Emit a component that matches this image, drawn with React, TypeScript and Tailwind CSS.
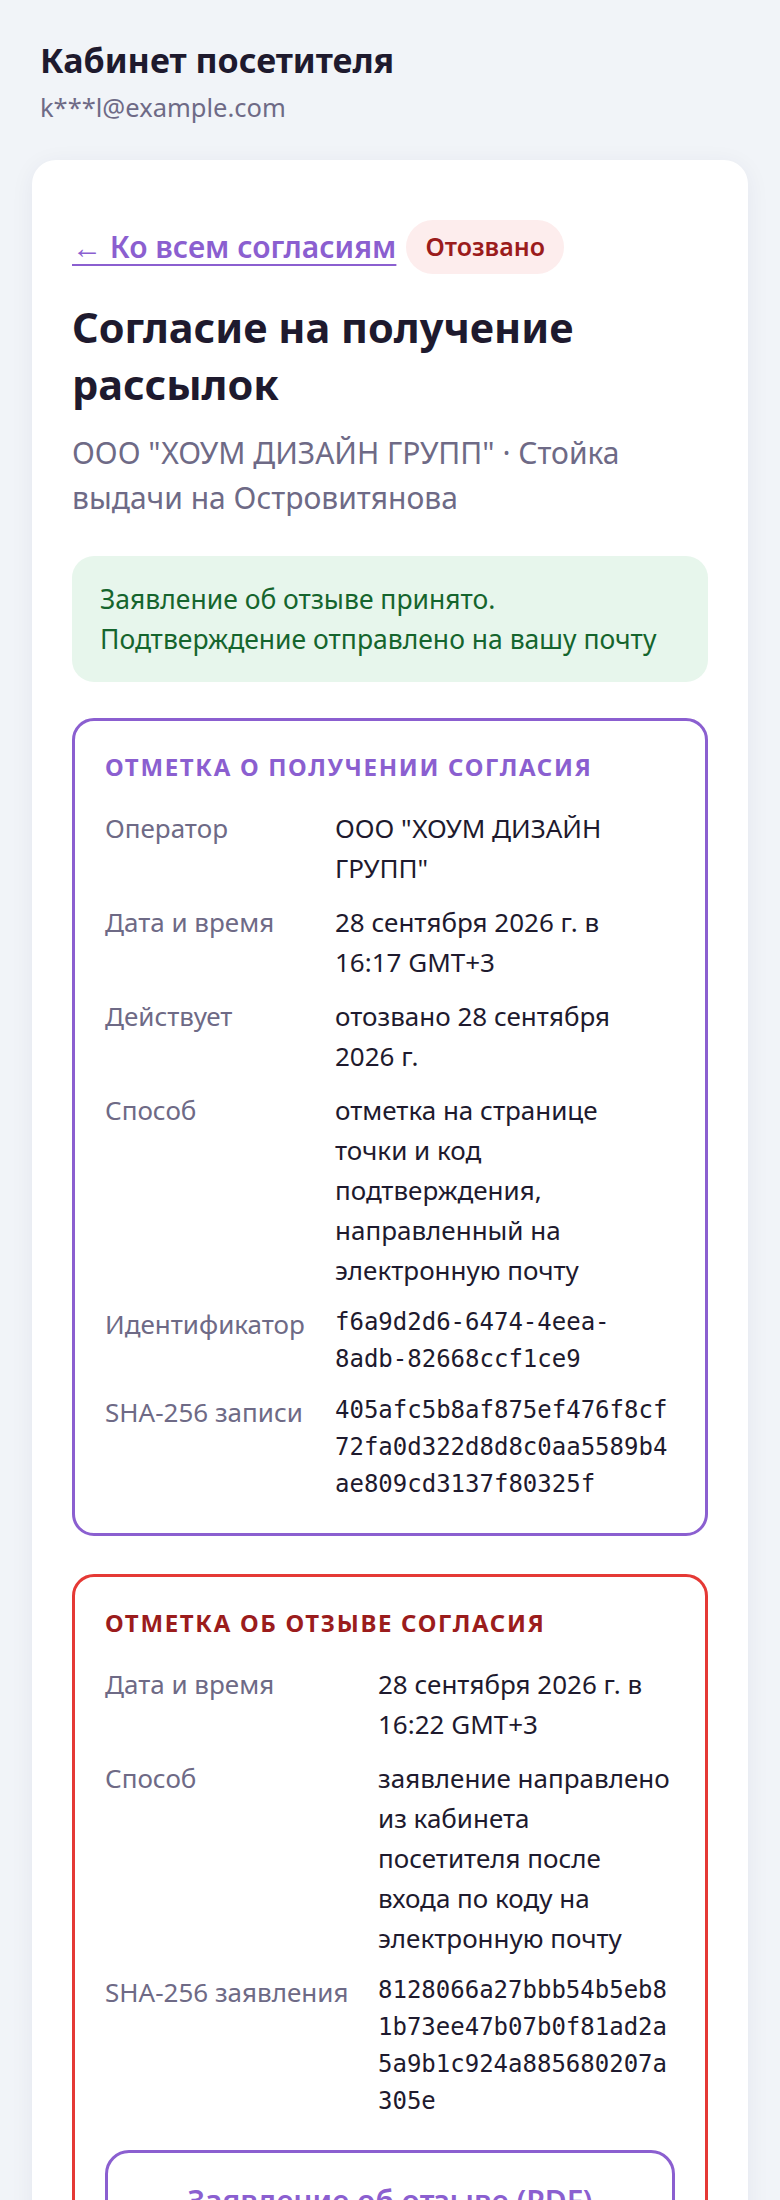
import React from "react";

type Row = { label: string; value: string; mono?: boolean };

const received: Row[] = [
  { label: "Оператор", value: 'ООО "ХОУМ ДИЗАЙН ГРУПП"' },
  { label: "Дата и время", value: "28 сентября 2026 г. в 16:17 GMT+3" },
  { label: "Действует", value: "отозвано 28 сентября 2026 г." },
  {
    label: "Способ",
    value:
      "отметка на странице точки и код подтверждения, направленный на электронную почту",
  },
  { label: "Идентификатор", value: "f6a9d2d6-6474-4eea-8adb-82668ccf1ce9", mono: true },
  {
    label: "SHA-256 записи",
    value: "405afc5b8af875ef476f8cf72fa0d322d8d8c0aa5589b4ae809cd3137f80325f",
    mono: true,
  },
];

const revoked: Row[] = [
  { label: "Дата и время", value: "28 сентября 2026 г. в 16:22 GMT+3" },
  {
    label: "Способ",
    value:
      "заявление направлено из кабинета посетителя после входа по коду на электронную почту",
  },
  {
    label: "SHA-256 заявления",
    value: "8128066a27bbb54b5eb81b73ee47b07b0f81ad2a5a9b1c924a885680207a305e",
    mono: true,
  },
];

function Rows({ rows, cols }: { rows: Row[]; cols: string }) {
  return (
    <dl className={`mt-[25px] grid ${cols} gap-x-[26px] gap-y-[14px]`}>
      {rows.map((r) => (
        <React.Fragment key={r.label}>
          <dt className="whitespace-nowrap text-[26px] leading-[40px] text-[#6e6a86]">
            {r.label}
          </dt>
          <dd
            className={
              r.mono
                ? "min-w-0 break-words font-['DejaVu_Sans_Mono',monospace] text-[24px] leading-[37px] text-[#1e1a2e]"
                : "min-w-0 text-[26px] leading-[40px] text-[#1e1a2e]"
            }
          >
            {r.value}
          </dd>
        </React.Fragment>
      ))}
    </dl>
  );
}

export default function App() {
  return (
    <div className="min-h-screen bg-[#f1f4f8] px-8 pt-[38px] font-['Noto_Sans',sans-serif]">
      <header className="pl-2">
        <h1 className="text-[34px] font-bold leading-[44px] text-[#1e1a2e]">
          Кабинет посетителя
        </h1>
        <p className="mt-[5px] text-[25.5px] leading-[40px] text-[#6e6a86]">
          k***l@example.com
        </p>
      </header>

      <main className="mt-[33px] rounded-[24px] bg-white px-10 pt-[60px] pb-10 shadow-[0_4px_24px_rgba(30,40,80,0.06)]">
        <div className="flex items-center gap-[10px]">
          <a
            href="#"
            className="text-[30px] font-semibold leading-[40px] text-[#8b5fd0] underline decoration-2 underline-offset-[6px]"
          >
            <span className="font-['Liberation_Sans',sans-serif] font-normal">←</span> Ко всем согласиям
          </a>
          <span className="flex h-[54px] items-center rounded-full bg-[#fdeded] px-[19px] text-[25px] font-semibold text-[#9b1c1c]">
            Отозвано
          </span>
        </div>

        <h2 className="mt-[25px] text-[41.5px] font-bold leading-[57px] text-[#1e1a2e]">
          Согласие на получение рассылок
        </h2>
        <p className="mt-[17px] text-[30px] leading-[45px] text-[#6e6a86]">
          ООО "ХОУМ ДИЗАЙН ГРУПП" · Стойка выдачи на Островитянова
        </p>

        <div className="mt-9 rounded-[22px] bg-[#e7f6ec] px-[28px] py-[23px] text-[26.5px] leading-[40px] text-[#15652d]">
          <p>Заявление об отзыве принято.</p>
          <p>Подтверждение отправлено на вашу почту</p>
        </div>

        <section className="mt-9 rounded-[22px] border-[3px] border-[#8b5fd0] p-[30px]">
          <h3 className="text-[24px] font-bold uppercase leading-[32px] tracking-[0.07em] text-[#8b5fd0]">
            Отметка о получении согласия
          </h3>
          <Rows rows={received} cols="grid-cols-[204px_336px]" />
        </section>

        <section className="mt-[38px] rounded-[22px] border-[3px] border-[#e53935] p-[30px]">
          <h3 className="text-[24px] font-bold uppercase leading-[32px] tracking-[0.07em] text-[#9b1c1c]">
            Отметка об отзыве согласия
          </h3>
          <Rows rows={revoked} cols="grid-cols-[247px_minmax(0,1fr)]" />
          <button className="mt-[30px] w-full rounded-[24px] border-[3px] border-[#8b5fd0] py-[28px] text-[30px] font-semibold leading-[40px] text-[#8b5fd0]">
            Заявление об отзыве (PDF)
          </button>
        </section>
      </main>
    </div>
  );
}
